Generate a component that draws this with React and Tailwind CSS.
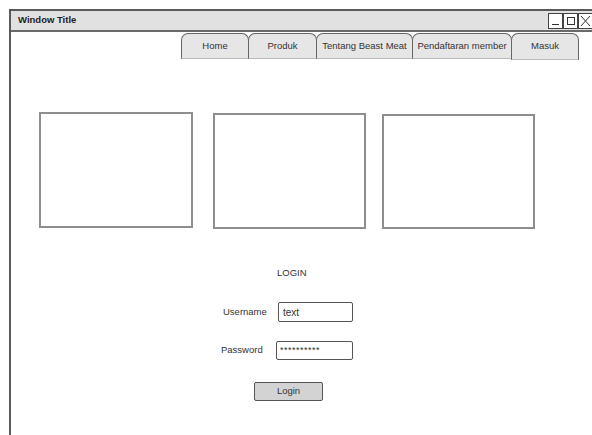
import React from 'react'

const tabs = [
  { label: 'Home', w: 'w-[68px]' },
  { label: 'Produk', w: 'w-[69px]' },
  { label: 'Tentang Beast Meat', w: 'w-[97px]' },
  { label: 'Pendaftaran member', w: 'w-[100px]' },
  { label: 'Masuk', w: 'w-[68px]', active: true },
]

function WindowControls() {
  return (
    <div className="ml-auto mr-[16px] flex">
      <div className="w-[15px] h-[16px] border border-[#444] bg-white flex items-end justify-center pb-[3px]">
        <div className="w-[7px] h-px bg-[#333]" />
      </div>
      <div className="w-[15px] h-[16px] border border-[#444] bg-white flex items-center justify-center">
        <div className="w-[8px] h-[8px] border border-[#333]" />
      </div>
      <div className="w-[15px] h-[16px] border border-[#444] bg-white flex items-center justify-center">
        <svg width="11" height="12" viewBox="0 0 11 12">
          <path d="M1 1 L10 11 M10 1 L1 11" stroke="#333" strokeWidth="1" fill="none" />
        </svg>
      </div>
    </div>
  )
}

function Tab({ label, w, active }) {
  return (
    <div
      className={`${w} ${active ? 'h-[27px]' : 'h-[26px]'} -ml-px first:ml-0 flex items-center justify-center rounded-t-[7px] border border-[#666] border-b-[#bbb] bg-[#e6e6e6] text-[9.5px] text-[#333]`}
    >
      {label}
    </div>
  )
}

function App() {
  return (
    <div className="w-[592px] h-[435px] overflow-hidden bg-white pl-[9px] pt-[9px] font-['Liberation_Sans',sans-serif] text-[#333]">
      <div className="w-[600px] h-[430px] border-l-2 border-t-2 border-[#5a5a5a]">
        {/* title bar */}
        <div className="h-[21px] flex items-center bg-[#e1e1e1] border-b-2 border-[#6a6a6a] pl-[7px]">
          <span className="text-[9.5px] font-bold text-[#222]">Window Title</span>
          <WindowControls />
        </div>

        {/* nav tabs */}
        <div className="ml-[170px] mt-px flex items-start">
          {tabs.map((t) => (
            <Tab key={t.label} {...t} />
          ))}
        </div>

        {/* image placeholders */}
        <div className="ml-[28px] mt-[52px] flex items-start">
          <div className="w-[154px] h-[116px] border-2 border-[#8e8e8e]" />
          <div className="ml-[20px] mt-px w-[153px] h-[116px] border-2 border-[#8e8e8e]" />
          <div className="ml-[16px] mt-[2px] w-[153px] h-[115px] border-2 border-[#8e8e8e]" />
        </div>

        {/* login form */}
        <div className="ml-[266px] mt-[38px] h-[12px] leading-[12px] text-[9.5px]">LOGIN</div>

        <div className="ml-[212px] mt-[23px] flex items-center">
          <span className="w-[55px] text-[9.5px]">Username</span>
          <div className="w-[75px] h-[20px] border border-[#555] rounded-[2px] pl-[4px] flex items-center text-[10px]">
            text
          </div>
        </div>

        <div className="ml-[210px] mt-[19px] flex items-center">
          <span className="w-[55px] text-[9.5px]">Password</span>
          <div className="w-[77px] h-[19px] border border-[#555] rounded-[2px] pl-[3px] flex items-center text-[9px] tracking-[0.5px]">
            **********
          </div>
        </div>

        <div className="ml-[243px] mt-[22px] w-[69px] h-[19px] border border-[#555] rounded-[2px] bg-[#d3d3d3] flex items-center justify-center text-[9.5px]">
          Login
        </div>
      </div>
    </div>
  )
}

export default App
